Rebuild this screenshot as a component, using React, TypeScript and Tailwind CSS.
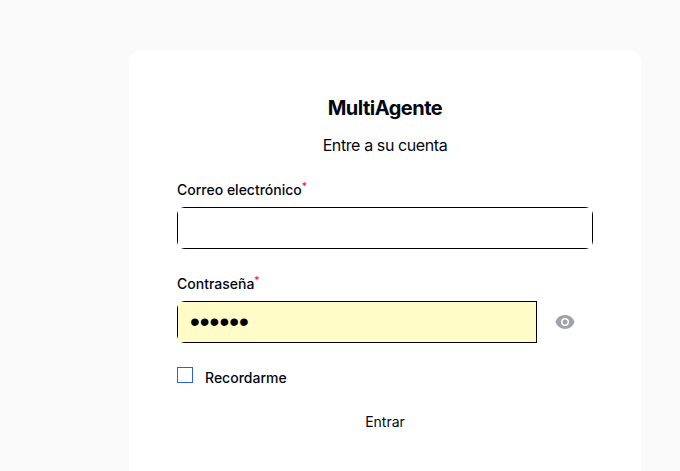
import { useState } from "react";

function Required() {
  return <sup className="font-normal text-rose-600">*</sup>;
}

export default function App() {
  const [show, setShow] = useState(false);
  return (
    <div className="flex min-h-screen flex-col bg-[#fafafa] pt-[50px] pr-[39px] pl-[129px] font-[Inter,sans-serif] text-gray-950">
      <main className="flex-1 rounded-t-xl bg-white px-12 pt-11 pb-8">
        <header className="text-center">
          <h1 className="text-xl leading-7 font-bold tracking-tight">MultiAgente</h1>
          <h2 className="mt-[11px] text-base leading-6 font-normal tracking-tight">Entre a su cuenta</h2>
        </header>
        <form className="mt-[21px]" onSubmit={(e) => e.preventDefault()}>
          <label htmlFor="email" className="block text-sm leading-6 font-medium">
            Correo electrónico
            <Required />
          </label>
          <div className="mt-[5px] overflow-hidden rounded-lg">
            <input id="email" type="email" className="block h-[42px] w-full border border-black bg-white px-3" />
          </div>
          <label htmlFor="password" className="mt-[23px] block text-sm leading-6 font-medium">
            Contraseña
            <Required />
          </label>
          <div className="mt-[5px] flex overflow-hidden rounded-lg">
            <input
              id="password"
              type={show ? "text" : "password"}
              defaultValue="secret"
              className={`h-[42px] min-w-0 flex-1 border border-black bg-[#fffcc8] px-3 text-black ${
                show ? "text-base" : "font-['Liberation_Sans',Arial,sans-serif] text-[28px]"
              }`}
            />
            <button
              type="button"
              aria-label="Mostrar contraseña"
              onClick={() => setShow(!show)}
              className="flex w-14 items-center justify-center text-[#a1a1aa]"
            >
              <svg viewBox="0 0 20 20" className="size-5" fill="currentColor">
                <path d="M10 12.5a2.5 2.5 0 1 0 0-5 2.5 2.5 0 0 0 0 5Z" />
                <path fillRule="evenodd" d="M.664 10.59a1.651 1.651 0 0 1 0-1.186A10.004 10.004 0 0 1 10 3c4.257 0 7.893 2.66 9.336 6.41.147.381.146.804 0 1.186A10.004 10.004 0 0 1 10 17c-4.257 0-7.893-2.66-9.336-6.41ZM14 10a4 4 0 1 1-8 0 4 4 0 0 1 8 0Z" clipRule="evenodd" />
              </svg>
            </button>
          </div>
          <label className="mt-6 flex items-start gap-3 text-sm leading-[22px] font-medium">
            <input type="checkbox" className="size-4 appearance-none border border-[#2563eb] checked:bg-[#2563eb]" />
            Recordarme
          </label>
          <button type="submit" className="mt-[21px] block w-full text-center text-sm leading-6">
            Entrar
          </button>
        </form>
      </main>
    </div>
  );
}
